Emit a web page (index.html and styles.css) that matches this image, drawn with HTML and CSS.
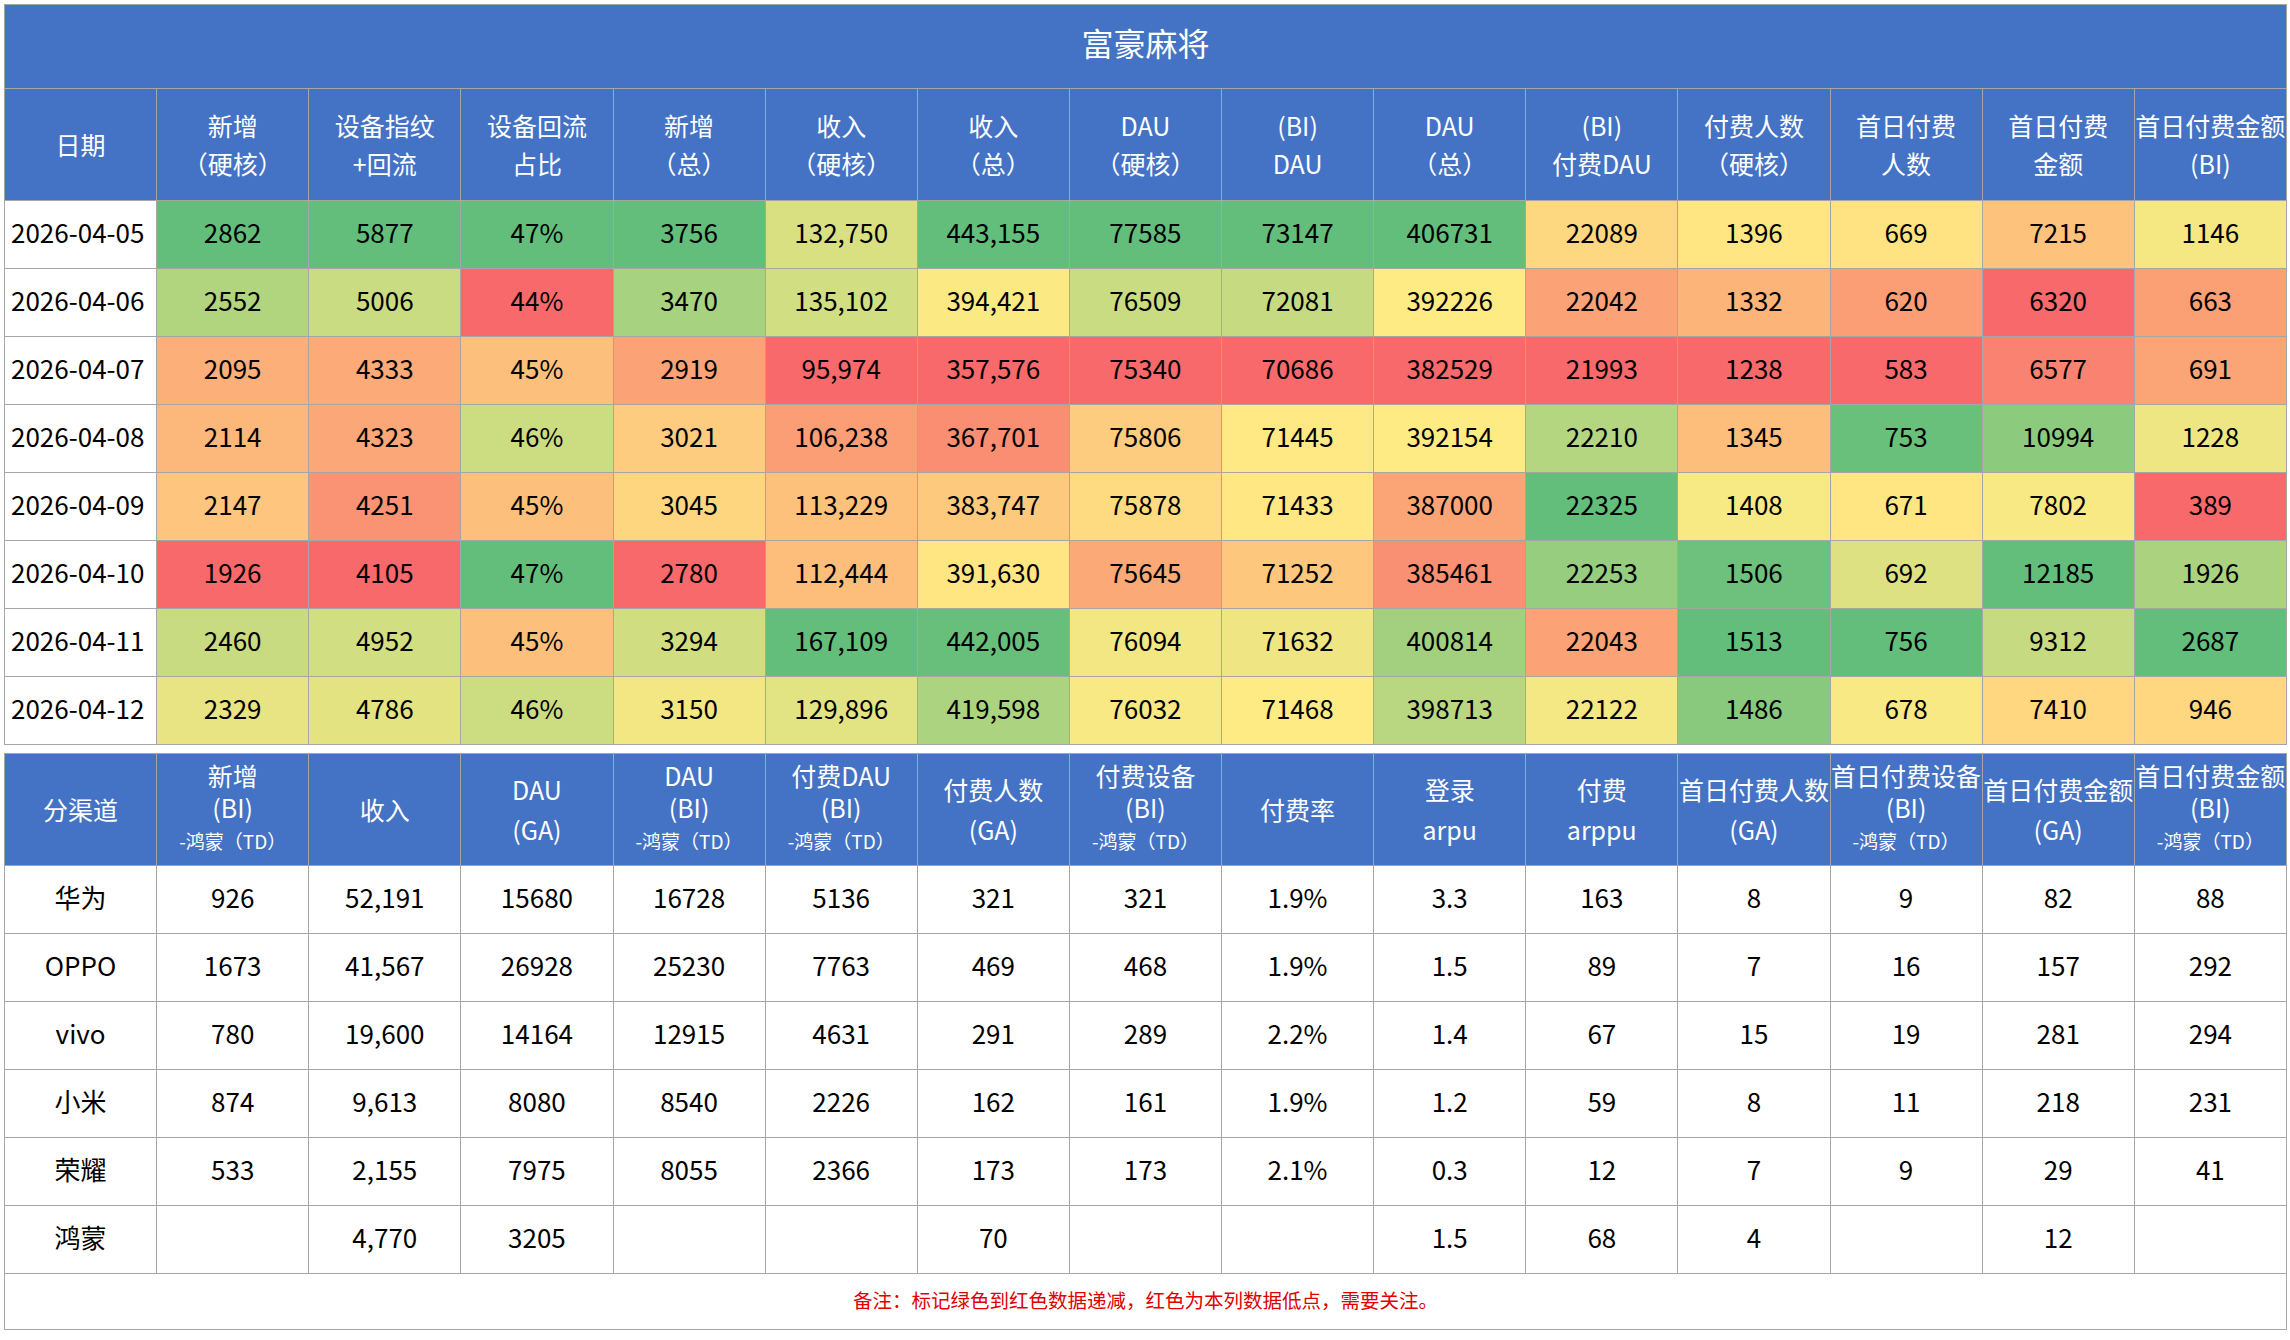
FILE: index.html
```html
<!DOCTYPE html>
<html lang="zh-CN">
<head>
<meta charset="utf-8">
<title>富豪麻将</title>
<link rel="stylesheet" href="styles.css">
</head>
<body>
<table class="grid daily">
  <colgroup><col><col><col><col><col><col><col><col><col><col><col><col><col><col><col></colgroup>
  <tr class="title"><th colspan="15">富豪麻将</th></tr>
  <tr class="head">
    <th><span class="ln">日期</span></th>
    <th><span class="ln">新增</span><span class="ln">（硬核）</span></th>
    <th><span class="ln">设备指纹</span><span class="ln">+回流</span></th>
    <th><span class="ln">设备回流</span><span class="ln">占比</span></th>
    <th><span class="ln">新增</span><span class="ln">（总）</span></th>
    <th><span class="ln">收入</span><span class="ln">（硬核）</span></th>
    <th><span class="ln">收入</span><span class="ln">（总）</span></th>
    <th><span class="ln">DAU</span><span class="ln">（硬核）</span></th>
    <th><span class="ln">(BI)</span><span class="ln">DAU</span></th>
    <th><span class="ln">DAU</span><span class="ln">（总）</span></th>
    <th><span class="ln">(BI)</span><span class="ln">付费DAU</span></th>
    <th><span class="ln">付费人数</span><span class="ln">（硬核）</span></th>
    <th><span class="ln">首日付费</span><span class="ln">人数</span></th>
    <th><span class="ln">首日付费</span><span class="ln">金额</span></th>
    <th><span class="ln">首日付费金额</span><span class="ln">(BI)</span></th>
  </tr>
  <tr class="data"><td class="date">2026-04-05</td><td>2862</td><td>5877</td><td>47%</td><td>3756</td><td>132,750</td><td>443,155</td><td>77585</td><td>73147</td><td>406731</td><td>22089</td><td>1396</td><td>669</td><td>7215</td><td>1146</td></tr>
  <tr class="data"><td class="date">2026-04-06</td><td>2552</td><td>5006</td><td>44%</td><td>3470</td><td>135,102</td><td>394,421</td><td>76509</td><td>72081</td><td>392226</td><td>22042</td><td>1332</td><td>620</td><td>6320</td><td>663</td></tr>
  <tr class="data"><td class="date">2026-04-07</td><td>2095</td><td>4333</td><td>45%</td><td>2919</td><td>95,974</td><td>357,576</td><td>75340</td><td>70686</td><td>382529</td><td>21993</td><td>1238</td><td>583</td><td>6577</td><td>691</td></tr>
  <tr class="data"><td class="date">2026-04-08</td><td>2114</td><td>4323</td><td>46%</td><td>3021</td><td>106,238</td><td>367,701</td><td>75806</td><td>71445</td><td>392154</td><td>22210</td><td>1345</td><td>753</td><td>10994</td><td>1228</td></tr>
  <tr class="data"><td class="date">2026-04-09</td><td>2147</td><td>4251</td><td>45%</td><td>3045</td><td>113,229</td><td>383,747</td><td>75878</td><td>71433</td><td>387000</td><td>22325</td><td>1408</td><td>671</td><td>7802</td><td>389</td></tr>
  <tr class="data"><td class="date">2026-04-10</td><td>1926</td><td>4105</td><td>47%</td><td>2780</td><td>112,444</td><td>391,630</td><td>75645</td><td>71252</td><td>385461</td><td>22253</td><td>1506</td><td>692</td><td>12185</td><td>1926</td></tr>
  <tr class="data"><td class="date">2026-04-11</td><td>2460</td><td>4952</td><td>45%</td><td>3294</td><td>167,109</td><td>442,005</td><td>76094</td><td>71632</td><td>400814</td><td>22043</td><td>1513</td><td>756</td><td>9312</td><td>2687</td></tr>
  <tr class="data"><td class="date">2026-04-12</td><td>2329</td><td>4786</td><td>46%</td><td>3150</td><td>129,896</td><td>419,598</td><td>76032</td><td>71468</td><td>398713</td><td>22122</td><td>1486</td><td>678</td><td>7410</td><td>946</td></tr>
</table>

<table class="grid channel">
  <colgroup><col><col><col><col><col><col><col><col><col><col><col><col><col><col><col></colgroup>
  <tr class="head">
    <th><span class="ln">分渠道</span></th>
    <th class="h3"><span class="ln">新增</span><span class="ln">(BI)</span><span class="ln sub">-鸿蒙（TD）</span></th>
    <th><span class="ln">收入</span></th>
    <th class="h2"><span class="ln">DAU</span><span class="ln">(GA)</span></th>
    <th class="h3"><span class="ln">DAU</span><span class="ln">(BI)</span><span class="ln sub">-鸿蒙（TD）</span></th>
    <th class="h3"><span class="ln">付费DAU</span><span class="ln">(BI)</span><span class="ln sub">-鸿蒙（TD）</span></th>
    <th class="h2"><span class="ln">付费人数</span><span class="ln">(GA)</span></th>
    <th class="h3"><span class="ln">付费设备</span><span class="ln">(BI)</span><span class="ln sub">-鸿蒙（TD）</span></th>
    <th><span class="ln">付费率</span></th>
    <th class="h2"><span class="ln">登录</span><span class="ln">arpu</span></th>
    <th class="h2"><span class="ln">付费</span><span class="ln">arppu</span></th>
    <th class="h2"><span class="ln">首日付费人数</span><span class="ln">(GA)</span></th>
    <th class="h3"><span class="ln">首日付费设备</span><span class="ln">(BI)</span><span class="ln sub">-鸿蒙（TD）</span></th>
    <th class="h2"><span class="ln">首日付费金额</span><span class="ln">(GA)</span></th>
    <th class="h3"><span class="ln">首日付费金额</span><span class="ln">(BI)</span><span class="ln sub">-鸿蒙（TD）</span></th>
  </tr>
  <tr><td>华为</td><td>926</td><td>52,191</td><td>15680</td><td>16728</td><td>5136</td><td>321</td><td>321</td><td>1.9%</td><td>3.3</td><td>163</td><td>8</td><td>9</td><td>82</td><td>88</td></tr>
  <tr><td>OPPO</td><td>1673</td><td>41,567</td><td>26928</td><td>25230</td><td>7763</td><td>469</td><td>468</td><td>1.9%</td><td>1.5</td><td>89</td><td>7</td><td>16</td><td>157</td><td>292</td></tr>
  <tr><td>vivo</td><td>780</td><td>19,600</td><td>14164</td><td>12915</td><td>4631</td><td>291</td><td>289</td><td>2.2%</td><td>1.4</td><td>67</td><td>15</td><td>19</td><td>281</td><td>294</td></tr>
  <tr><td>小米</td><td>874</td><td>9,613</td><td>8080</td><td>8540</td><td>2226</td><td>162</td><td>161</td><td>1.9%</td><td>1.2</td><td>59</td><td>8</td><td>11</td><td>218</td><td>231</td></tr>
  <tr><td>荣耀</td><td>533</td><td>2,155</td><td>7975</td><td>8055</td><td>2366</td><td>173</td><td>173</td><td>2.1%</td><td>0.3</td><td>12</td><td>7</td><td>9</td><td>29</td><td>41</td></tr>
  <tr><td>鸿蒙</td><td></td><td>4,770</td><td>3205</td><td></td><td></td><td>70</td><td></td><td></td><td>1.5</td><td>68</td><td>4</td><td></td><td>12</td><td></td></tr>
  <tr class="note"><td colspan="15">备注：标记绿色到红色数据递减，红色为本列数据低点，需要关注。</td></tr>
</table>
<script src="script.js"></script>
</body>
</html>
```

FILE: styles.css
```css
html, body {
  margin: 0;
  background: #ffffff;
}
body {
  padding: 4px 0 0 4px;
  font-family: "Noto Sans CJK SC", "Microsoft YaHei", sans-serif;
  color: #000;
}
.grid {
  border-collapse: collapse;
  table-layout: fixed;
  width: 2283px;
}
.grid th,
.grid td {
  border: 1px solid #a6a6a6;
  padding: 0;
  text-align: center;
  vertical-align: middle;
  white-space: nowrap;
  overflow: hidden;
}
.grid th {
  background: #4472c4;
  color: #ffffff;
  font-weight: normal;
  font-size: 25px;
}
.title th {
  height: 73px;
  padding-bottom: 10px;
  font-size: 32px;
}
.head th {
  height: 109px;
  padding-bottom: 2px;
}
.ln {
  display: block;
  line-height: 38px;
}
.channel .h2 .ln {
  line-height: 40px;
}
.channel .h3 .ln {
  line-height: 32px;
}
.channel .h3 .sub {
  font-size: 19px;
  line-height: 36px;
}
.grid td {
  height: 61px;
  padding-bottom: 6px;
  font-size: 26px;
  background: #ffffff;
}
.grid td.date {
  text-align: left;
  padding-left: 6px;
}
.daily {
  margin-bottom: 8px;
}
.note td {
  height: 51px;
  padding-bottom: 4px;
  font-size: 19.5px;
  color: #e00000;
}
```

FILE: script.js
```js
(function () {
  var RED = [248, 105, 107], YEL = [255, 235, 132], GRN = [99, 190, 123];
  function mix(a, b, t) {
    return 'rgb(' + [0, 1, 2].map(function (i) {
      return Math.round(a[i] + (b[i] - a[i]) * t);
    }).join(',') + ')';
  }
  var rows = Array.prototype.slice.call(document.querySelectorAll('.daily tr.data'));
  var cols = rows[0].cells.length;
  for (var c = 1; c < cols; c++) {
    var vals = rows.map(function (r) {
      return parseFloat(r.cells[c].textContent.replace(/[,%]/g, ''));
    });
    var s = vals.slice().sort(function (a, b) { return a - b; });
    var min = s[0], max = s[s.length - 1];
    var pos = (s.length - 1) * 0.5, lo = Math.floor(pos), fr = pos - lo;
    var mid = s[lo] + (s[Math.min(lo + 1, s.length - 1)] - s[lo]) * fr;
    rows.forEach(function (r, i) {
      var v = vals[i], col;
      if (v <= mid) {
        col = mix(RED, YEL, mid === min ? 1 : (v - min) / (mid - min));
      } else {
        col = mix(YEL, GRN, max === mid ? 1 : (v - mid) / (max - mid));
      }
      r.cells[c].style.backgroundColor = col;
    });
  }
})();
```
